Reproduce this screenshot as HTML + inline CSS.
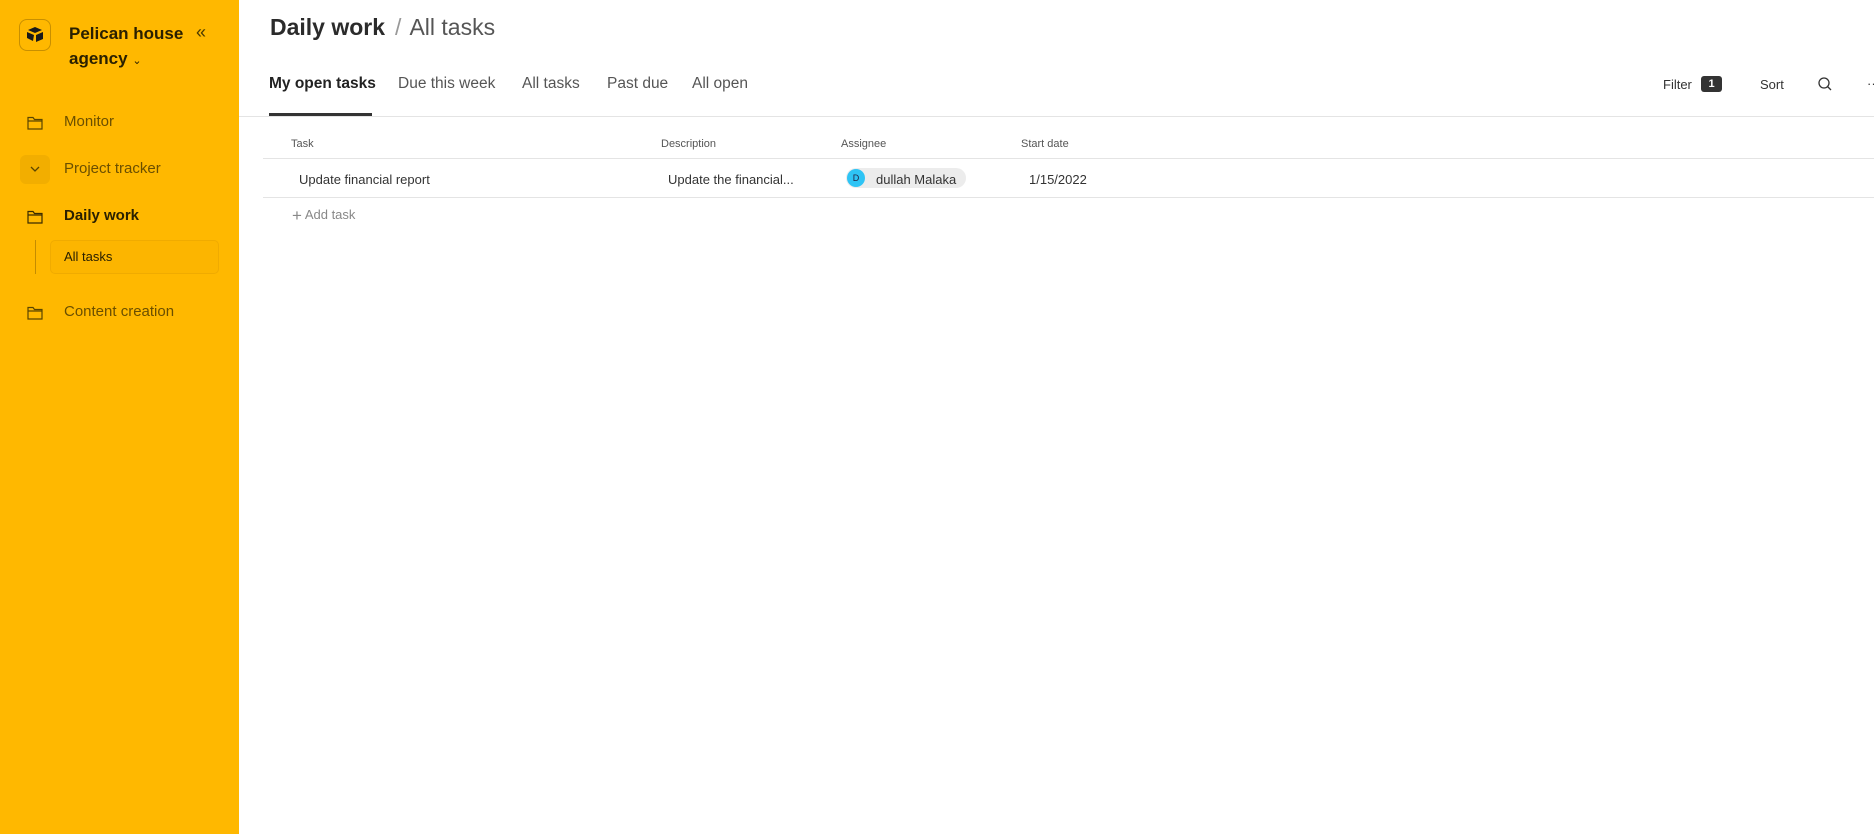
<!DOCTYPE html>
<html><head><meta charset="utf-8"><style>
*{box-sizing:border-box;margin:0;padding:0}
body{width:1874px;height:834px;overflow:hidden;background:#fff;font-family:"Liberation Sans",sans-serif;color:#333;position:relative}
.sb{position:absolute;left:0;top:0;width:239px;height:834px;background:#FFB800}
.a{position:absolute;white-space:nowrap}
.logo{left:19px;top:19px;width:32px;height:32px;border:1px solid #c88f00;border-radius:8px;background:#FFB800}
.nav{font-size:15px;color:#6b4f00}
.hl{height:1px;background:#e4e4e4;position:absolute}
.tab{font-size:15.5px;color:#555;top:75px}
.th{font-size:11px;color:#555;top:138px}
.td{font-size:13px;color:#333;top:172px}
</style></head><body>
<div class="sb">
  <div class="a logo"><svg width="30" height="30" viewBox="0 0 30 30"><path d="M8 10 L15 7 L22 10 L15 13Z" fill="#1a1a1a"/><path d="M7 12 L14 15 L13 21 L7 18Z M16 15 L23 12 L23 19 L16 22Z" fill="#1a1a1a"/></svg></div>
  <div class="a" style="left:69px;top:21px;font-size:17px;font-weight:bold;color:#2a2000;line-height:25px">Pelican house<br>agency <span style="font-size:11px;font-weight:normal">&#8964;</span></div>
  <div class="a" style="left:196px;top:22px;font-size:18px;color:#4a3a00">&laquo;</div>
  <svg class="a" style="left:27px;top:116px" width="16" height="14" viewBox="0 0 16 14"><path d="M1 1.5h5l1.5 2H15v9.5H1z M1 5h14" fill="none" stroke="#5a4500" stroke-width="1.2"/></svg>
  <div class="a nav" style="left:64px;top:113px">Monitor</div>
  <div class="a" style="left:20px;top:155px;width:30px;height:29px;border-radius:6px;background:#f2ae00"></div>
  <svg class="a" style="left:30px;top:165px" width="10" height="8" viewBox="0 0 10 8"><path d="M1 2l4 4 4-4" fill="none" stroke="#5a4500" stroke-width="1.3"/></svg>
  <div class="a nav" style="left:64px;top:160px">Project tracker</div>
  <svg class="a" style="left:27px;top:210px" width="16" height="14" viewBox="0 0 16 14"><path d="M1 1.5h5l1.5 2H15v9.5H1z M1 5h14" fill="none" stroke="#3a2c00" stroke-width="1.2"/></svg>
  <div class="a nav" style="left:64px;top:207px;color:#2a2000;font-weight:bold">Daily work</div>
  <div class="a" style="left:35px;top:240px;width:1px;height:34px;background:#c48c00"></div>
  <div class="a" style="left:50px;top:240px;width:169px;height:34px;border:1px solid #f0ab00;border-radius:5px;background:#fcb500"></div>
  <div class="a" style="left:64px;top:249px;font-size:13px;color:#2a2000">All tasks</div>
  <svg class="a" style="left:27px;top:306px" width="16" height="14" viewBox="0 0 16 14"><path d="M1 1.5h5l1.5 2H15v9.5H1z M1 5h14" fill="none" stroke="#5a4500" stroke-width="1.2"/></svg>
  <div class="a nav" style="left:64px;top:303px">Content creation</div>
</div>
<div class="a" style="left:270px;top:14px;font-size:23px;font-weight:bold;color:#2b2b2b">Daily work<span style="font-weight:normal;color:#999;margin:0 8px 0 10px">/</span><span style="font-weight:normal;color:#555">All tasks</span></div>
<div class="a tab" style="left:269px;color:#222;font-weight:bold">My open tasks</div>
<div class="a tab" style="left:398px">Due this week</div>
<div class="a tab" style="left:522px">All tasks</div>
<div class="a tab" style="left:607px">Past due</div>
<div class="a tab" style="left:692px">All open</div>
<div class="a" style="left:269px;top:113px;width:103px;height:3px;background:#333"></div>
<div class="hl" style="left:239px;top:116px;width:1635px"></div>
<div class="a" style="left:1663px;top:77px;font-size:13px;color:#333">Filter</div>
<div class="a" style="left:1701px;top:76px;width:21px;height:16px;background:#333;border-radius:3px;color:#fff;font-size:11px;font-weight:bold;text-align:center;line-height:16px">1</div>
<div class="a" style="left:1760px;top:77px;font-size:13px;color:#333">Sort</div>
<svg class="a" style="left:1817px;top:76px" width="16" height="16" viewBox="0 0 16 16"><circle cx="7" cy="7" r="5" fill="none" stroke="#333" stroke-width="1.3"/><path d="M10.5 10.5l3.5 3.5" stroke="#333" stroke-width="1.3"/></svg>
<div class="a" style="left:1867px;top:76px;font-size:13px;color:#333">&middot;&middot;</div>
<div class="a th" style="left:291px">Task</div>
<div class="a th" style="left:661px">Description</div>
<div class="a th" style="left:841px">Assignee</div>
<div class="a th" style="left:1021px">Start date</div>
<div class="hl" style="left:263px;top:158px;width:1611px"></div>
<div class="a td" style="left:299px">Update financial report</div>
<div class="a td" style="left:668px">Update the financial...</div>
<div class="a" style="left:846px;top:168px;width:120px;height:20px;border-radius:10px;background:#ececec"></div>
<div class="a" style="left:847px;top:169px;width:18px;height:18px;border-radius:50%;background:#2ec4f5;font-size:9px;color:#224;text-align:center;line-height:18px">D</div>
<div class="a td" style="left:876px">dullah Malaka</div>
<div class="a td" style="left:1029px">1/15/2022</div>
<div class="hl" style="left:263px;top:197px;width:1611px"></div>
<div class="a" style="left:292px;top:206px;font-size:13px;color:#888"><span style="font-size:17px;vertical-align:-2px">+</span> Add task</div>
</body></html>
